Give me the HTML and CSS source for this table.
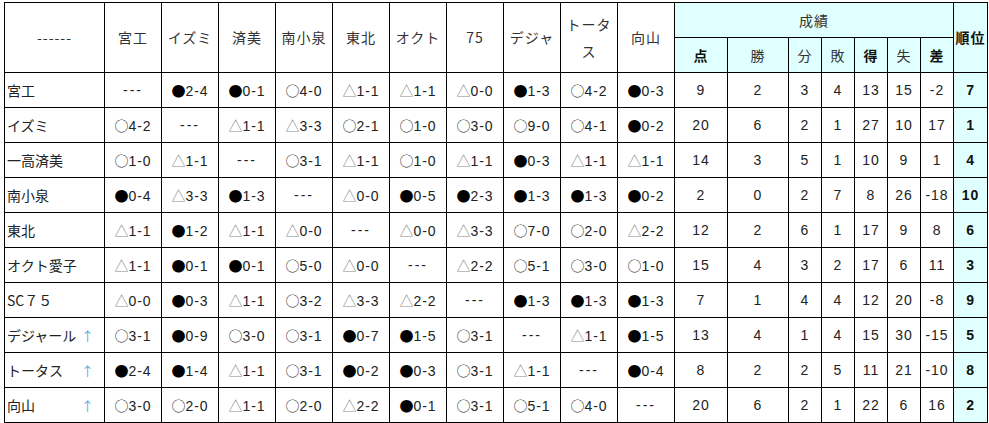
FILE: index.html
```html
<!DOCTYPE html>
<html lang="ja">
<head>
<meta charset="utf-8">
<title>星取表</title>
<link rel="stylesheet" href="styles.css">
</head>
<body>
<table class="league">
  <colgroup>
    <col class="c-name">
    <col class="c-res"><col class="c-res"><col class="c-res"><col class="c-res"><col class="c-res">
    <col class="c-res"><col class="c-res"><col class="c-res"><col class="c-res"><col class="c-res">
    <col class="c-pt"><col class="c-win">
    <col class="c-s"><col class="c-s"><col class="c-s"><col class="c-s"><col class="c-s">
    <col class="c-rank">
  </colgroup>
  <thead>
    <tr>
      <th rowspan="2">------</th>
      <th rowspan="2">宮工</th>
      <th rowspan="2">イズミ</th>
      <th rowspan="2">済美</th>
      <th rowspan="2">南小泉</th>
      <th rowspan="2">東北</th>
      <th rowspan="2">オクト</th>
      <th rowspan="2">75</th>
      <th rowspan="2">デジャ</th>
      <th rowspan="2" class="wrap">トータ<br>ス</th>
      <th rowspan="2">向山</th>
      <th colspan="7" class="cy">成績</th>
      <th rowspan="2" class="cy b">順位</th>
    </tr>
    <tr>
      <th class="cy b">点</th>
      <th class="cy">勝</th>
      <th class="cy">分</th>
      <th class="cy">敗</th>
      <th class="cy b">得</th>
      <th class="cy">失</th>
      <th class="cy b">差</th>
    </tr>
  </thead>
  <tbody>
    <tr>
      <td class="nm">宮工</td>
      <td class="dash">---</td>
      <td><span class="lo">●</span>2-4</td>
      <td><span class="lo">●</span>0-1</td>
      <td><span class="wi">○</span>4-0</td>
      <td><span class="dr">△</span>1-1</td>
      <td><span class="dr">△</span>1-1</td>
      <td><span class="dr">△</span>0-0</td>
      <td><span class="lo">●</span>1-3</td>
      <td><span class="wi">○</span>4-2</td>
      <td><span class="lo">●</span>0-3</td>
      <td>9</td><td>2</td><td>3</td><td>4</td><td>13</td><td>15</td><td>-2</td>
      <td class="rk">7</td>
    </tr>
    <tr>
      <td class="nm">イズミ</td>
      <td><span class="wi">○</span>4-2</td>
      <td class="dash">---</td>
      <td><span class="dr">△</span>1-1</td>
      <td><span class="dr">△</span>3-3</td>
      <td><span class="wi">○</span>2-1</td>
      <td><span class="wi">○</span>1-0</td>
      <td><span class="wi">○</span>3-0</td>
      <td><span class="wi">○</span>9-0</td>
      <td><span class="wi">○</span>4-1</td>
      <td><span class="lo">●</span>0-2</td>
      <td>20</td><td>6</td><td>2</td><td>1</td><td>27</td><td>10</td><td>17</td>
      <td class="rk">1</td>
    </tr>
    <tr>
      <td class="nm">一高済美</td>
      <td><span class="wi">○</span>1-0</td>
      <td><span class="dr">△</span>1-1</td>
      <td class="dash">---</td>
      <td><span class="wi">○</span>3-1</td>
      <td><span class="dr">△</span>1-1</td>
      <td><span class="wi">○</span>1-0</td>
      <td><span class="dr">△</span>1-1</td>
      <td><span class="lo">●</span>0-3</td>
      <td><span class="dr">△</span>1-1</td>
      <td><span class="dr">△</span>1-1</td>
      <td>14</td><td>3</td><td>5</td><td>1</td><td>10</td><td>9</td><td>1</td>
      <td class="rk">4</td>
    </tr>
    <tr>
      <td class="nm">南小泉</td>
      <td><span class="lo">●</span>0-4</td>
      <td><span class="dr">△</span>3-3</td>
      <td><span class="lo">●</span>1-3</td>
      <td class="dash">---</td>
      <td><span class="dr">△</span>0-0</td>
      <td><span class="lo">●</span>0-5</td>
      <td><span class="lo">●</span>2-3</td>
      <td><span class="lo">●</span>1-3</td>
      <td><span class="lo">●</span>1-3</td>
      <td><span class="lo">●</span>0-2</td>
      <td>2</td><td>0</td><td>2</td><td>7</td><td>8</td><td>26</td><td>-18</td>
      <td class="rk">10</td>
    </tr>
    <tr>
      <td class="nm">東北</td>
      <td><span class="dr">△</span>1-1</td>
      <td><span class="lo">●</span>1-2</td>
      <td><span class="dr">△</span>1-1</td>
      <td><span class="dr">△</span>0-0</td>
      <td class="dash">---</td>
      <td><span class="dr">△</span>0-0</td>
      <td><span class="dr">△</span>3-3</td>
      <td><span class="wi">○</span>7-0</td>
      <td><span class="wi">○</span>2-0</td>
      <td><span class="dr">△</span>2-2</td>
      <td>12</td><td>2</td><td>6</td><td>1</td><td>17</td><td>9</td><td>8</td>
      <td class="rk">6</td>
    </tr>
    <tr>
      <td class="nm">オクト愛子</td>
      <td><span class="dr">△</span>1-1</td>
      <td><span class="lo">●</span>0-1</td>
      <td><span class="lo">●</span>0-1</td>
      <td><span class="wi">○</span>5-0</td>
      <td><span class="dr">△</span>0-0</td>
      <td class="dash">---</td>
      <td><span class="dr">△</span>2-2</td>
      <td><span class="wi">○</span>5-1</td>
      <td><span class="wi">○</span>3-0</td>
      <td><span class="wi">○</span>1-0</td>
      <td>15</td><td>4</td><td>3</td><td>2</td><td>17</td><td>6</td><td>11</td>
      <td class="rk">3</td>
    </tr>
    <tr>
      <td class="nm">SC７５</td>
      <td><span class="dr">△</span>0-0</td>
      <td><span class="lo">●</span>0-3</td>
      <td><span class="dr">△</span>1-1</td>
      <td><span class="wi">○</span>3-2</td>
      <td><span class="dr">△</span>3-3</td>
      <td><span class="dr">△</span>2-2</td>
      <td class="dash">---</td>
      <td><span class="lo">●</span>1-3</td>
      <td><span class="lo">●</span>1-3</td>
      <td><span class="lo">●</span>1-3</td>
      <td>7</td><td>1</td><td>4</td><td>4</td><td>12</td><td>20</td><td>-8</td>
      <td class="rk">9</td>
    </tr>
    <tr>
      <td class="nm"><span class="tn">デジャール</span><span class="up">↑</span></td>
      <td><span class="wi">○</span>3-1</td>
      <td><span class="lo">●</span>0-9</td>
      <td><span class="wi">○</span>3-0</td>
      <td><span class="wi">○</span>3-1</td>
      <td><span class="lo">●</span>0-7</td>
      <td><span class="lo">●</span>1-5</td>
      <td><span class="wi">○</span>3-1</td>
      <td class="dash">---</td>
      <td><span class="dr">△</span>1-1</td>
      <td><span class="lo">●</span>1-5</td>
      <td>13</td><td>4</td><td>1</td><td>4</td><td>15</td><td>30</td><td>-15</td>
      <td class="rk">5</td>
    </tr>
    <tr>
      <td class="nm"><span class="tn">トータス</span><span class="up">↑</span></td>
      <td><span class="lo">●</span>2-4</td>
      <td><span class="lo">●</span>1-4</td>
      <td><span class="dr">△</span>1-1</td>
      <td><span class="wi">○</span>3-1</td>
      <td><span class="lo">●</span>0-2</td>
      <td><span class="lo">●</span>0-3</td>
      <td><span class="wi">○</span>3-1</td>
      <td><span class="dr">△</span>1-1</td>
      <td class="dash">---</td>
      <td><span class="lo">●</span>0-4</td>
      <td>8</td><td>2</td><td>2</td><td>5</td><td>11</td><td>21</td><td>-10</td>
      <td class="rk">8</td>
    </tr>
    <tr>
      <td class="nm"><span class="tn">向山</span><span class="up">↑</span></td>
      <td><span class="wi">○</span>3-0</td>
      <td><span class="wi">○</span>2-0</td>
      <td><span class="dr">△</span>1-1</td>
      <td><span class="wi">○</span>2-0</td>
      <td><span class="dr">△</span>2-2</td>
      <td><span class="lo">●</span>0-1</td>
      <td><span class="wi">○</span>3-1</td>
      <td><span class="wi">○</span>5-1</td>
      <td><span class="wi">○</span>4-0</td>
      <td class="dash">---</td>
      <td>20</td><td>6</td><td>2</td><td>1</td><td>22</td><td>6</td><td>16</td>
      <td class="rk">2</td>
    </tr>
  </tbody>
</table>
</body>
</html>
```
FILE: styles.css
```css
html, body {
  margin: 0;
  padding: 0;
  background: #ffffff;
}

body {
  padding: 2px 0 0 4px;
  font-family: "Liberation Sans", "Noto Sans CJK JP", sans-serif;
  font-size: 14px;
  color: #222;
}

.league {
  border-collapse: collapse;
  table-layout: fixed;
  width: 984px;
}

.c-name { width: 100px; }
.c-res { width: 57px; }
.c-pt { width: 53px; }
.c-win { width: 61px; }
.c-s { width: 33px; }
.c-rank { width: 34px; }

.league th,
.league td {
  border: 1px solid #000;
  padding: 0;
  text-align: center;
  vertical-align: middle;
  font-weight: normal;
  white-space: nowrap;
  overflow: hidden;
}

.league thead tr {
  height: 35px;
}

.league th {
  color: #333;
  font-family: "Noto Sans CJK JP", "Liberation Sans", sans-serif;
  font-size: 14px;
  line-height: 23px;
  letter-spacing: 1px;
}

.league th.wrap {
  line-height: 27px;
}

.league tbody tr {
  height: 35px;
}

.league td {
  height: 34px;
  letter-spacing: 1px;
}

.league td.dash {
  letter-spacing: 2px;
}

.league td.nm {
  text-align: left;
  padding-left: 2px;
  letter-spacing: 0;
  font-family: "Noto Sans CJK JP", sans-serif;
  font-size: 14px;
}

.tn {
  display: inline-block;
  width: 74px;
}

.up {
  color: #5ea9de;
  font-family: "Noto Sans CJK JP", sans-serif;
  font-size: 13px;
}

.cy {
  background: #e0ffff;
}

.b {
  font-weight: bold !important;
  color: #111 !important;
}

.league td.rk {
  background: #e0ffff;
  font-weight: bold;
  color: #111;
}

.lo,
.wi,
.dr {
  font-family: "Noto Sans CJK JP", sans-serif;
  font-size: 14px;
  letter-spacing: 0;
}

.lo { color: #000; }
.wi { color: #333; }
.dr { color: #8a8a8a; }
```
